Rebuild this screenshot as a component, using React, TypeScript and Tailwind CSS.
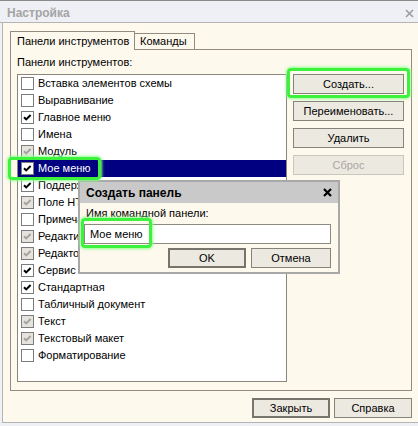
import React from 'react';

type Mark = 'none' | 'on' | 'dim';

interface PanelItem {
  label: string;
  mark: Mark;
  selected?: boolean;
}

const items: PanelItem[] = [
  { label: 'Вставка элементов схемы', mark: 'none' },
  { label: 'Выравнивание', mark: 'none' },
  { label: 'Главное меню', mark: 'on' },
  { label: 'Имена', mark: 'none' },
  { label: 'Модуль', mark: 'dim' },
  { label: 'Мое меню', mark: 'on', selected: true },
  { label: 'Поддержка', mark: 'on' },
  { label: 'Поле HTML документа', mark: 'dim' },
  { label: 'Примечания', mark: 'none' },
  { label: 'Редактирование', mark: 'dim' },
  { label: 'Редактор диалогов', mark: 'dim' },
  { label: 'Сервис', mark: 'on' },
  { label: 'Стандартная', mark: 'on' },
  { label: 'Табличный документ', mark: 'none' },
  { label: 'Текст', mark: 'dim' },
  { label: 'Текстовый макет', mark: 'dim' },
  { label: 'Форматирование', mark: 'none' },
];

const CheckBox = ({ mark }: { mark: Mark }) => (
  <span
    className={
      'flex h-[13px] w-[13px] shrink-0 items-center justify-center border border-[#7c7c7c] ' +
      (mark === 'dim' ? 'bg-[#e6e3dc]' : 'bg-white')
    }
  >
    {mark !== 'none' && (
      <svg width="11" height="11" viewBox="0 0 11 11">
        <path
          d="M2 5.2 L4.2 7.4 L8.6 3"
          fill="none"
          stroke={mark === 'on' ? '#000' : '#a3a3a3'}
          strokeWidth="2"
        />
      </svg>
    )}
  </span>
);

// plain push button in the 1C / XP classic look
const Btn = ({
  children,
  className = '',
  disabled,
  isDefault,
}: {
  children: React.ReactNode;
  className?: string;
  disabled?: boolean;
  isDefault?: boolean;
}) => (
  <div
    className={
      'flex h-[20px] items-center justify-center whitespace-nowrap bg-[#ece9e1] ' +
      (disabled
        ? 'border border-[#c9c6be] text-[#aaa79f] '
        : isDefault
          ? 'border-2 border-[#77746c] text-black '
          : 'border border-[#86837b] text-black ') +
      className
    }
  >
    {children}
  </div>
);

const Glow = ({ className }: { className: string }) => (
  <div
    className={
      'pointer-events-none absolute z-20 rounded-[4px] border-[3px] border-[#3df23d] shadow-[0_0_3px_1px_#8dff8d] ' +
      className
    }
  />
);

export default function App() {
  return (
    <div className="relative h-[426px] w-[418px] overflow-hidden bg-[#eef0f5] font-['Liberation_Sans',Arial,sans-serif] text-[11px] leading-none text-black">
      {/* title bar */}
      <div className="flex h-[23px] items-center justify-between border-t border-b border-t-[#8a8a8a] border-b-[#b4b4b4] pl-[7px] pr-[4px] pt-[3px]">
        <span className="text-[12px] font-bold text-[#a4a4a4]">Настройка</span>
        <svg width="9" height="9" viewBox="0 0 9 9">
          <path d="M1 1 L8 8 M8 1 L1 8" stroke="#9d9d9d" strokeWidth="1.6" />
        </svg>
      </div>

      {/* window body */}
      <div className="ml-[2px] flex h-[400px] flex-col border-b border-l border-[#b4b4b4] bg-[#fef9ed] pl-[7px] pt-[8px]">
        {/* tabs */}
        <div className="flex h-[18px] items-end whitespace-nowrap">
          <div className="relative z-10 -mb-px flex h-[19px] w-[125px] items-center border-l border-r border-t border-[#918c7f] bg-[#fef9ed] pl-[6px]">
            Панели инструментов
          </div>
          <div className="flex h-[16px] w-[60px] items-center border-r border-t border-[#918c7f] pl-[5px]">Команды</div>
        </div>

        {/* tab page */}
        <div className="flex h-[342px] w-[402px] border border-[#918c7f] pl-[6px]">
          <div className="flex w-[270px] flex-col">
            <div className="flex h-[24px] items-center">Панели инструментов:</div>
            <div className="h-[308px] border border-[#8a867b] bg-white">
              {items.map((it) => (
                <div
                  key={it.label}
                  className={
                    'flex h-[17px] items-center gap-[4px] whitespace-nowrap pl-[3px] ' +
                    (it.selected ? 'bg-[#000080] text-white' : '')
                  }
                >
                  <CheckBox mark={it.mark} />
                  <span>{it.label}</span>
                </div>
              ))}
            </div>
          </div>
          <div className="ml-[6px] mt-[24px] flex w-[111px] flex-col gap-[7px]">
            <Btn>Создать...</Btn>
            <Btn>Переименовать...</Btn>
            <Btn>Удалить</Btn>
            <Btn disabled>Сброс</Btn>
          </div>
        </div>

        {/* bottom buttons */}
        <div className="mt-[7px] flex w-[402px] justify-end gap-[4px]">
          <Btn isDefault className="w-[78px]">
            Закрыть
          </Btn>
          <Btn className="w-[78px]">Справка</Btn>
        </div>
      </div>

      {/* modal "Создать панель" */}
      <div className="absolute left-[78px] top-[180px] z-10 flex h-[94px] w-[262px] flex-col border-2 border-[#a8a8a8] bg-[#fef9ed]">
        <div className="flex h-[21px] items-center justify-between bg-[#c9c9c9] pl-[6px] pr-[6px]">
          <span className="text-[12px] font-bold">Создать панель</span>
          <svg width="9" height="9" viewBox="0 0 9 9">
            <path d="M1 1 L8 8 M8 1 L1 8" stroke="#000" strokeWidth="2.2" />
          </svg>
        </div>
        <div className="flex flex-col pl-[4px]">
          <div className="flex h-[21px] items-center pl-[2px]">Имя командной панели:</div>
          <div className="flex h-[20px] w-[247px] items-center border border-[#8e8a80] bg-white pl-[5px]">Мое меню</div>
          <div className="mt-[4px] flex w-[247px] justify-end gap-[5px]">
            <Btn isDefault className="w-[78px]">
              OK
            </Btn>
            <Btn className="w-[80px]">Отмена</Btn>
          </div>
        </div>
      </div>

      {/* green callouts */}
      <Glow className="left-[287px] top-[68px] h-[30px] w-[123px]" />
      <Glow className="left-[8px] top-[157px] h-[23px] w-[93px]" />
      <Glow className="left-[81px] top-[218px] h-[30px] w-[71px]" />
    </div>
  );
}
